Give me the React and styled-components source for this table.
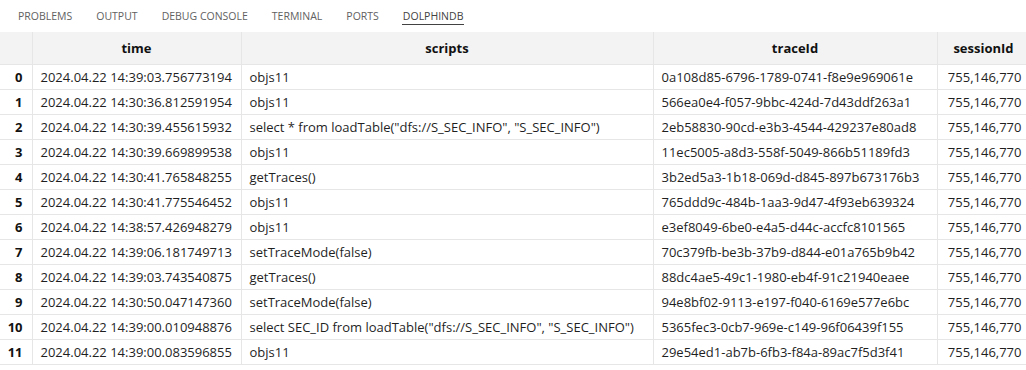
import styled, { createGlobalStyle } from "styled-components";

const GlobalStyle = createGlobalStyle`
  body {
    margin: 0;
    background: #ffffff;
    font-family: "Open Sans", "Noto Sans", sans-serif;
  }
`;

const Panel = styled.div`
  width: 1026px;
  height: 370px;
  overflow: hidden;
  background: #ffffff;
`;

const TabBar = styled.div`
  display: flex;
  height: 32px;
  padding-left: 6px;
  box-sizing: border-box;
`;

const Tab = styled.div`
  position: relative;
  padding: 0 12px;
  height: 32px;
  line-height: 32px;
  font-size: 10.5px;
  color: ${(p) => (p.active ? "#424242" : "#616161")};
  &::after {
    content: "";
    display: ${(p) => (p.active ? "block" : "none")};
    position: absolute;
    left: 11px;
    right: 11px;
    top: 24px;
    height: 1px;
    background: #424242;
  }
`;

const Table = styled.table`
  border-collapse: collapse;
  table-layout: fixed;
  width: 1030px;
  font-size: 13px;
  color: #1f1f1f;
`;

const HeadCell = styled.th`
  height: 32px;
  padding: 0 8px;
  background: #f3f3f3;
  border: 1px solid #e6e6e6;
  border-top: none;
  font-weight: 700;
  color: #111111;
  text-align: ${(p) => p.align || "center"};
  &:first-child {
    border-left: none;
  }
`;

const Cell = styled.td`
  height: 24px;
  padding: 0 8px;
  border: 1px solid #e6e6e6;
  white-space: nowrap;
  overflow: hidden;
  text-align: ${(p) => p.align || "left"};
  &:first-child {
    border-left: none;
  }
`;

const IndexCell = styled(Cell)`
  font-weight: 700;
  color: #111111;
  text-align: right;
  padding: 0 9px 0 0;
`;

const rows = [
  ["2024.04.22 14:39:03.756773194", "objs11", "0a108d85-6796-1789-0741-f8e9e969061e"],
  ["2024.04.22 14:30:36.812591954", "objs11", "566ea0e4-f057-9bbc-424d-7d43ddf263a1"],
  ["2024.04.22 14:30:39.455615932", 'select * from loadTable("dfs://S_SEC_INFO", "S_SEC_INFO")', "2eb58830-90cd-e3b3-4544-429237e80ad8"],
  ["2024.04.22 14:30:39.669899538", "objs11", "11ec5005-a8d3-558f-5049-866b51189fd3"],
  ["2024.04.22 14:30:41.765848255", "getTraces()", "3b2ed5a3-1b18-069d-d845-897b673176b3"],
  ["2024.04.22 14:30:41.775546452", "objs11", "765ddd9c-484b-1aa3-9d47-4f93eb639324"],
  ["2024.04.22 14:38:57.426948279", "objs11", "e3ef8049-6be0-e4a5-d44c-accfc8101565"],
  ["2024.04.22 14:39:06.181749713", "setTraceMode(false)", "70c379fb-be3b-37b9-d844-e01a765b9b42"],
  ["2024.04.22 14:39:03.743540875", "getTraces()", "88dc4ae5-49c1-1980-eb4f-91c21940eaee"],
  ["2024.04.22 14:30:50.047147360", "setTraceMode(false)", "94e8bf02-9113-e197-f040-6169e577e6bc"],
  ["2024.04.22 14:39:00.010948876", 'select SEC_ID from loadTable("dfs://S_SEC_INFO", "S_SEC_INFO")', "5365fec3-0cb7-969e-c149-96f06439f155"],
  ["2024.04.22 14:39:00.083596855", "objs11", "29e54ed1-ab7b-6fb3-f84a-89ac7f5d3f41"],
];

const tabs = ["PROBLEMS", "OUTPUT", "DEBUG CONSOLE", "TERMINAL", "PORTS", "DOLPHINDB"];

export default function App() {
  return (
    <Panel>
      <GlobalStyle />
      <TabBar>
        {tabs.map((t) => (
          <Tab key={t} active={t === "DOLPHINDB"}>
            {t}
          </Tab>
        ))}
      </TabBar>
      <Table>
        <colgroup>
          <col style={{ width: 32 }} />
          <col style={{ width: 209 }} />
          <col style={{ width: 412 }} />
          <col style={{ width: 284 }} />
          <col style={{ width: 93 }} />
        </colgroup>
        <thead>
          <tr>
            <HeadCell />
            <HeadCell>time</HeadCell>
            <HeadCell>scripts</HeadCell>
            <HeadCell>traceId</HeadCell>
            <HeadCell>sessionId</HeadCell>
          </tr>
        </thead>
        <tbody>
          {rows.map((r, i) => (
            <tr key={i}>
              <IndexCell>{i}</IndexCell>
              <Cell>{r[0]}</Cell>
              <Cell>{r[1]}</Cell>
              <Cell>{r[2]}</Cell>
              <Cell align="right">755,146,770</Cell>
            </tr>
          ))}
        </tbody>
      </Table>
    </Panel>
  );
}
